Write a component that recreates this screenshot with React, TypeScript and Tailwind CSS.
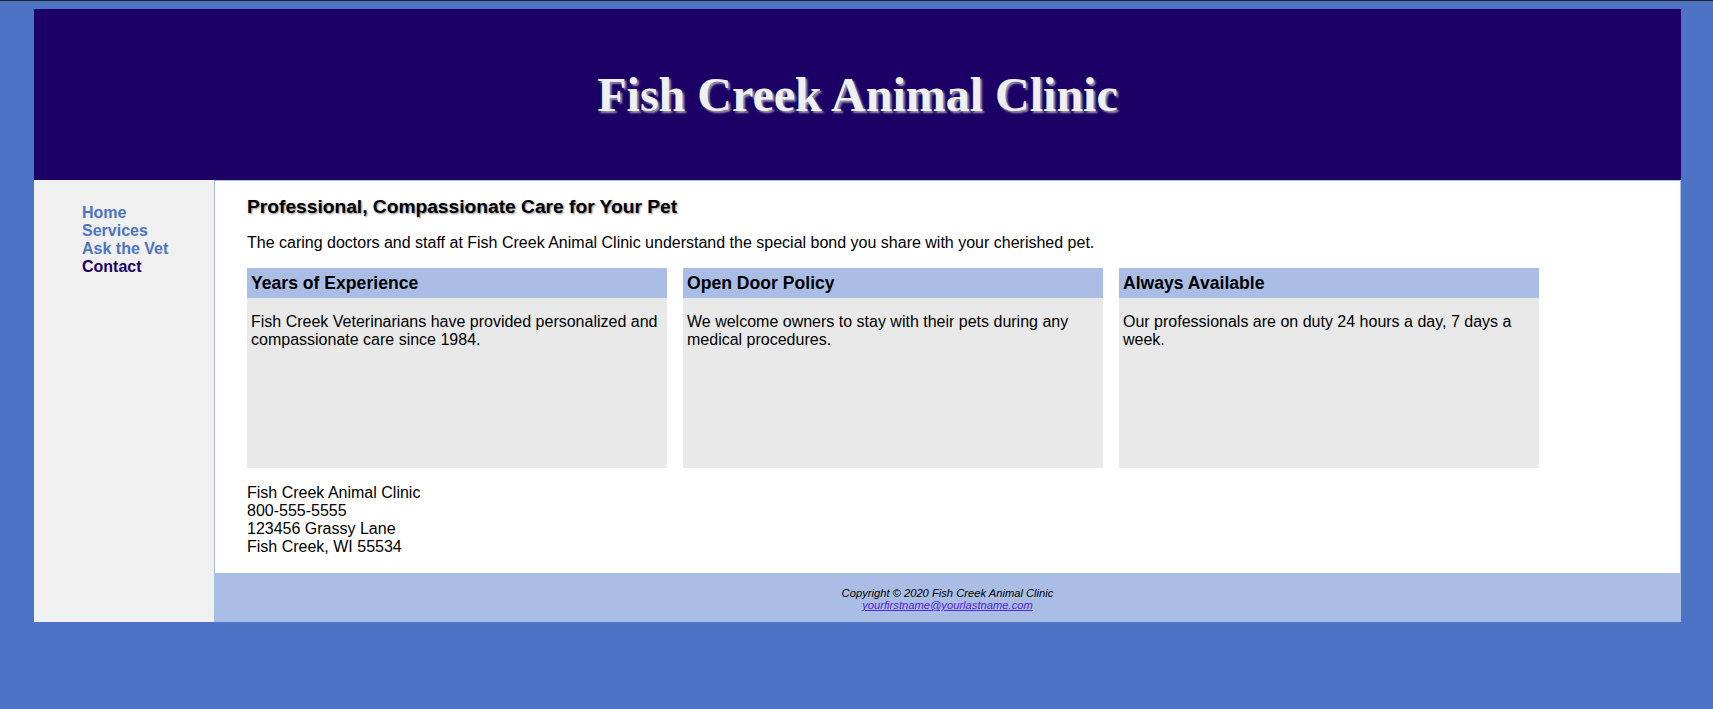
import React from "react";

const sans = { fontFamily: '"Liberation Sans", Arial, sans-serif' };

function Card({ title, children }: { title: string; children: React.ReactNode }) {
  return (
    <div className="w-[420px] h-[200px] flex flex-col">
      <div className="h-[30px] bg-[#aabde4] px-[4px] flex items-center">
        <h3 className="text-[17.6px] leading-[30px] font-bold text-black">{title}</h3>
      </div>
      <div className="flex-1 bg-[#e9e9e9] px-[4px] pt-[15px]">
        <p className="text-[16px] leading-[18px] text-black">{children}</p>
      </div>
    </div>
  );
}

export default function App() {
  return (
    <div className="min-h-screen bg-[#4d74c4]" style={sans}>
      <div className="h-px bg-[#222222]" />
      <div className="ml-[34px] mt-[8px] w-[1647px]">
        <header className="h-[171px] bg-[#1c0066] flex items-center justify-center">
          <h1
            className="text-[48px] font-bold text-[#f0f0f0] [text-shadow:2px_2px_2px_#9a9ab0]"
            style={{ fontFamily: '"Liberation Serif", "Times New Roman", serif' }}
          >
            Fish Creek Animal Clinic
          </h1>
        </header>
        <div className="flex">
          <nav className="w-[180px] bg-[#f0f0f0] pt-[24px] pl-[48px]">
            <ul className="text-[16px] leading-[18px] font-bold">
              <li><a className="text-[#4d74c4]" href="#">Home</a></li>
              <li><a className="text-[#4d74c4]" href="#">Services</a></li>
              <li><a className="text-[#4d74c4]" href="#">Ask the Vet</a></li>
              <li><a className="text-[#1c0066]" href="#">Contact</a></li>
            </ul>
          </nav>
          <div className="flex-1 flex flex-col">
            <main className="bg-white border border-[#aabde4] pl-[32px] pt-[15px] pb-[17px]">
              <h2 className="text-[19.2px] leading-[22px] font-bold text-black [text-shadow:1px_1px_2px_#888]">
                Professional, Compassionate Care for Your Pet
              </h2>
              <p className="mt-[16px] text-[16px] leading-[18px] text-black">
                The caring doctors and staff at Fish Creek Animal Clinic understand the special bond you share with your cherished pet.
              </p>
              <div className="mt-[16px] flex gap-[16px]">
                <Card title="Years of Experience">
                  Fish Creek Veterinarians have provided personalized and compassionate care since 1984.
                </Card>
                <Card title="Open Door Policy">
                  We welcome owners to stay with their pets during any medical procedures.
                </Card>
                <Card title="Always Available">
                  Our professionals are on duty 24 hours a day, 7 days a week.
                </Card>
              </div>
              <div className="mt-[16px] text-[16px] leading-[18px] text-black">
                Fish Creek Animal Clinic<br />
                800-555-5555<br />
                123456 Grassy Lane<br />
                Fish Creek, WI 55534
              </div>
            </main>
            <footer className="h-[48px] bg-[#aabde4] pt-[13px] text-center text-[11.2px] leading-[12px] italic text-black">
              <div>Copyright © 2020 Fish Creek Animal Clinic</div>
              <a className="underline text-[#5522dd]" href="#">yourfirstname@yourlastname.com</a>
            </footer>
          </div>
        </div>
      </div>
    </div>
  );
}
